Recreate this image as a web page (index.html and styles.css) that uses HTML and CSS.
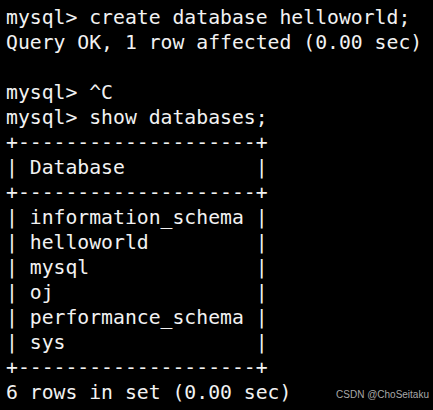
FILE: index.html
```html
<!DOCTYPE html>
<html>
<head>
<meta charset="utf-8">
<link rel="stylesheet" href="styles.css">
</head>
<body>
<div class="term">
<div class="out">
<div class="ln">mysql&gt; create database helloworld;</div>
<div class="ln">Query OK, 1 row affected (0.00 sec)</div>
<div class="ln"> </div>
<div class="ln">mysql&gt; ^C</div>
<div class="ln">mysql&gt; show databases;</div>
<div class="ln">+--------------------+</div>
<div class="ln">| Database           |</div>
<div class="ln">+--------------------+</div>
<div class="ln">| information_schema |</div>
<div class="ln">| helloworld         |</div>
<div class="ln">| mysql              |</div>
<div class="ln">| oj                 |</div>
<div class="ln">| performance_schema |</div>
<div class="ln">| sys                |</div>
<div class="ln">+--------------------+</div>
<div class="ln">6 rows in set (0.00 sec)</div>
</div>
<div class="mark">CSDN @ChoSeitaku</div>
</div>
</body>
</html>
```
FILE: styles.css
```css
html, body {
  margin: 0;
  padding: 0;
  background: #000;
}
.term {
  position: relative;
  width: 433px;
  height: 410px;
  background: #000;
  overflow: hidden;
}
.out {
  display: flex;
  flex-direction: column;
  align-items: flex-start;
  padding: 5px 0 0 6px;
  font-family: "DejaVu Sans Mono", monospace;
  font-size: 19.75px;
  line-height: 25px;
  color: #f2f2f2;
}
.ln {
  white-space: pre;
  height: 25px;
}
.mark {
  position: absolute;
  right: 4px;
  bottom: 9px;
  font-family: "Liberation Sans", Arial, sans-serif;
  font-size: 10px;
  line-height: 12px;
  color: #a8a8a8;
}
```
